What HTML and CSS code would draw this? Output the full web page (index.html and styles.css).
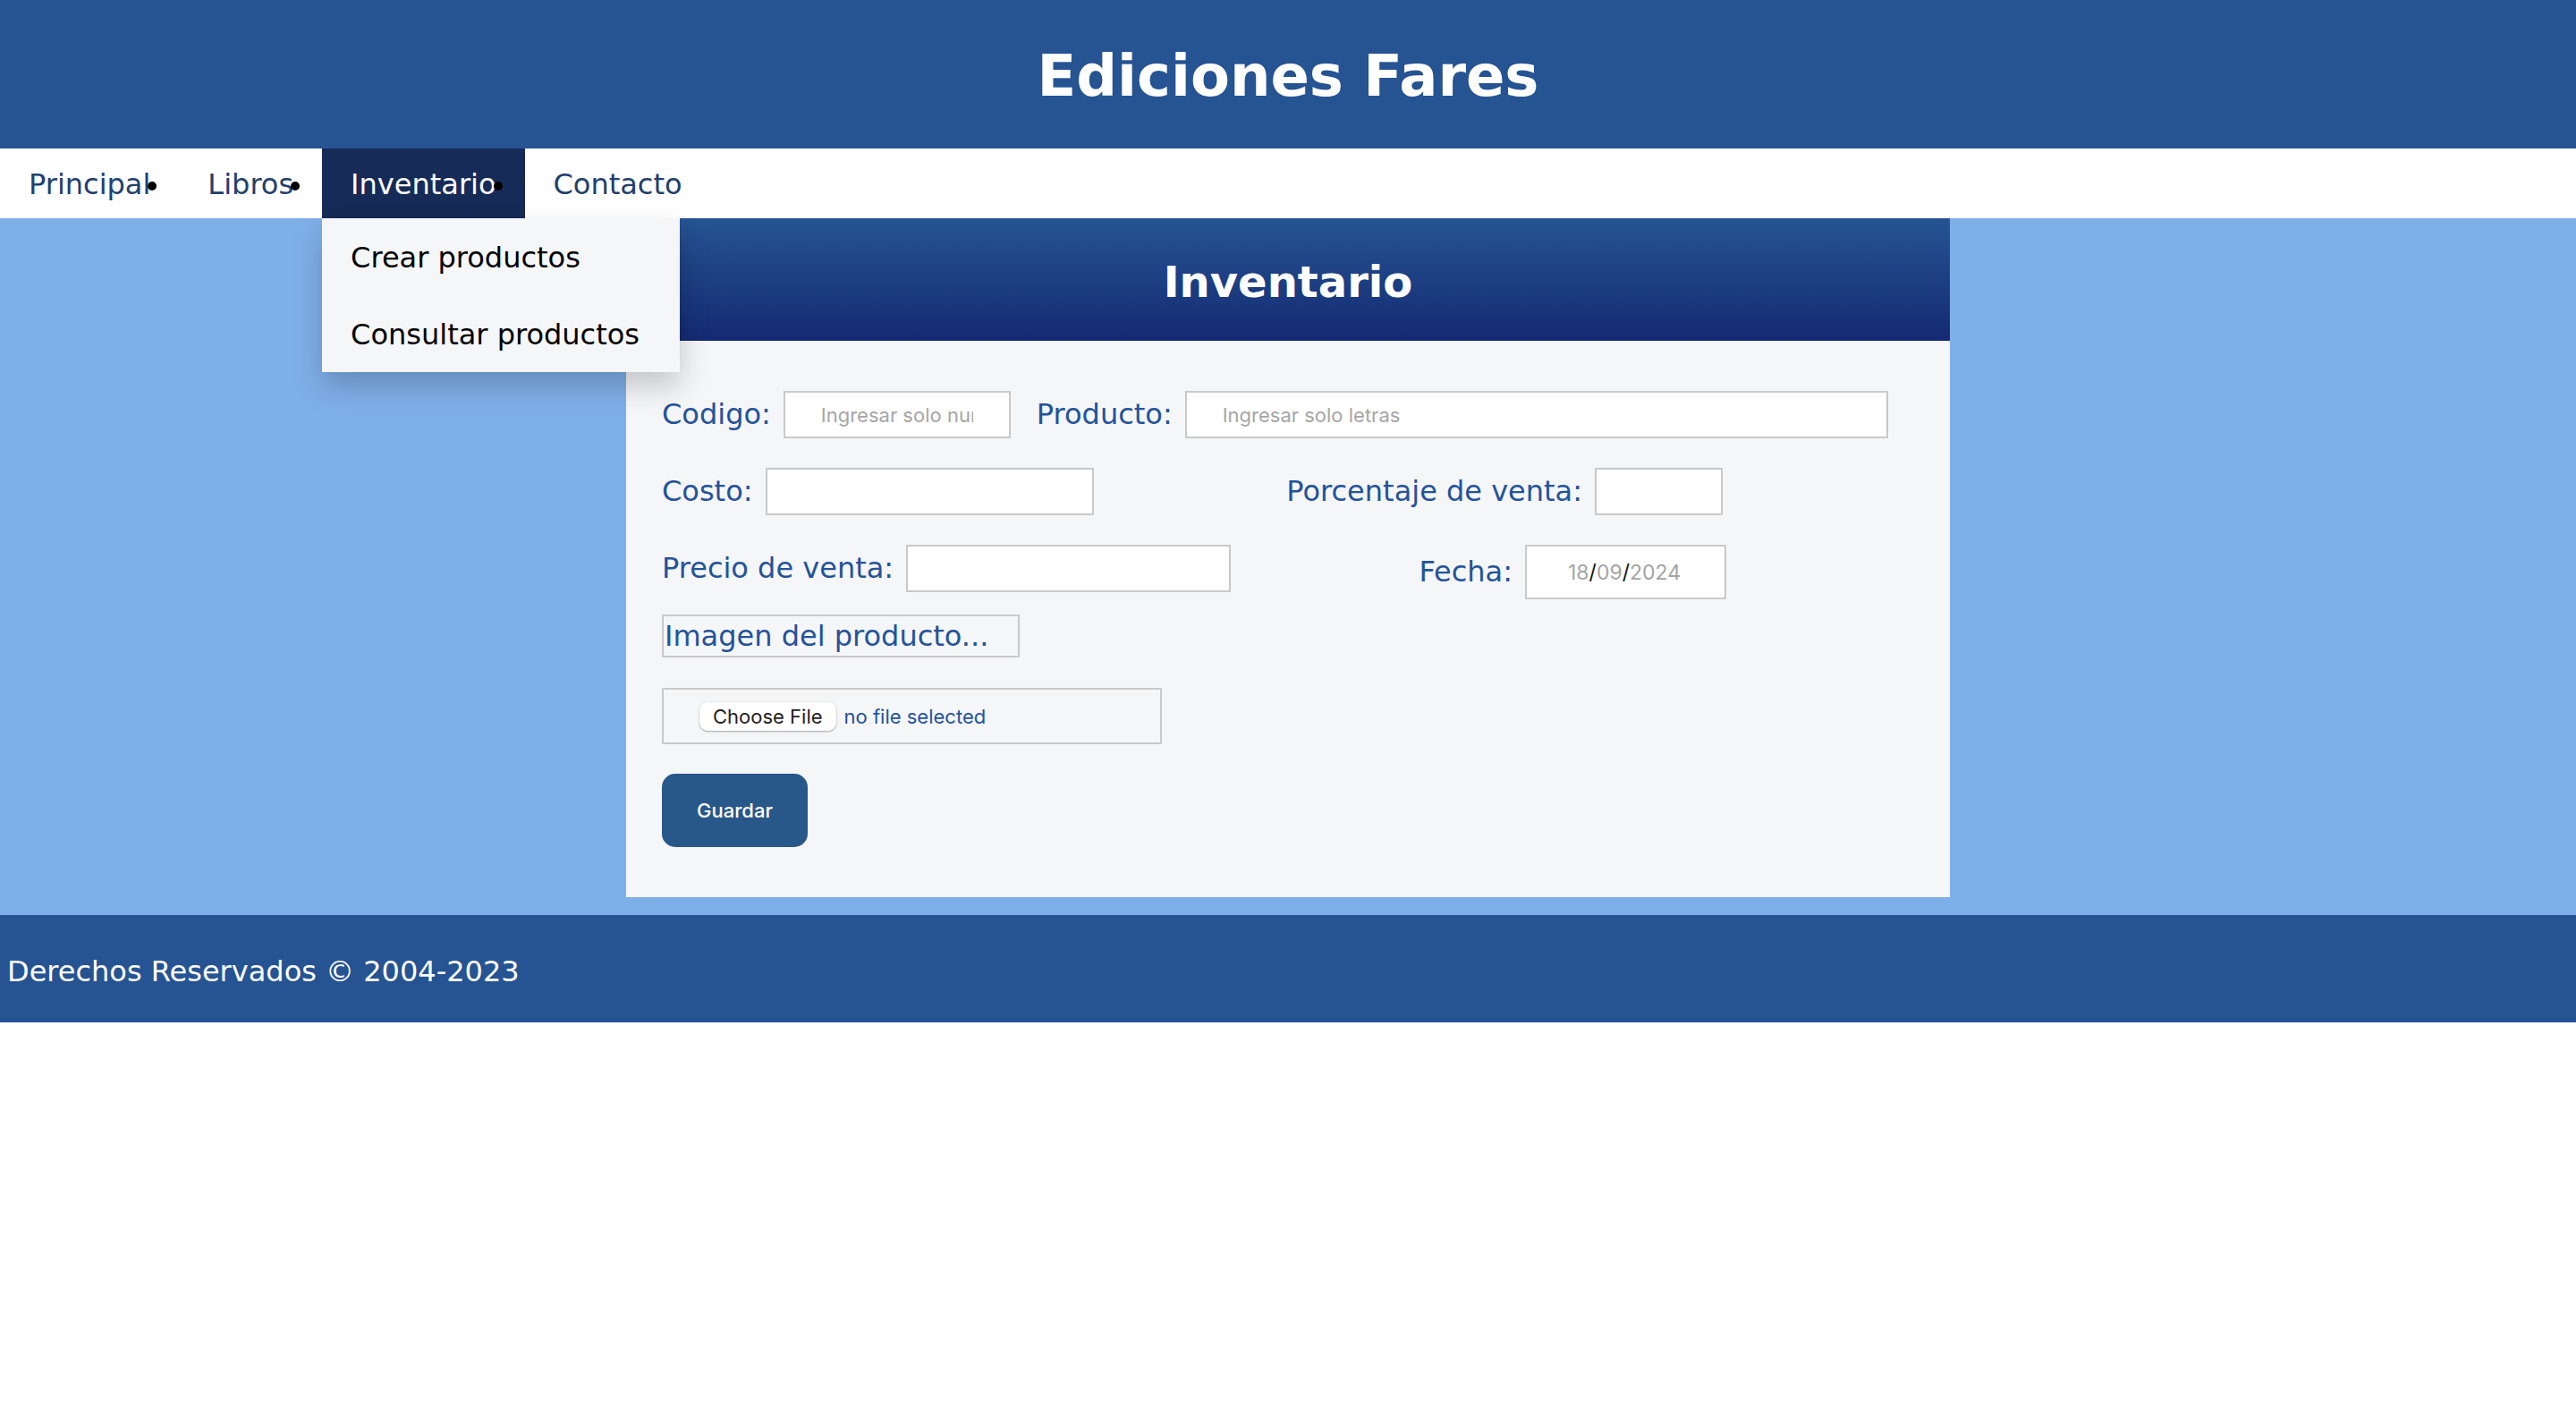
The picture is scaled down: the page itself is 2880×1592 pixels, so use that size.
FILE: index.html
```html
<!DOCTYPE html>
<html lang="es">
<head>
<meta charset="utf-8">
<title>Inventario - Ediciones Fares</title>
<link rel="stylesheet" href="styles.css">
</head>
<body>
<header class="site-header">
  <h1 class="site-title">Ediciones Fares</h1>
</header>
<nav class="main-nav">
  <ul class="nav-list">
    <li class="nav-item"><a class="nav-link" href="#">Principal</a></li>
    <li class="nav-item"><a class="nav-link" href="#">Libros</a></li>
    <li class="nav-item">
      <a class="nav-link active" href="#">Inventario</a>
      <div class="dropdown-menu">
        <a class="dropdown-link" href="#">Crear productos</a>
        <a class="dropdown-link" href="#">Consultar productos</a>
      </div>
    </li>
    <li class="nav-item"><a class="nav-link" href="#">Contacto</a></li>
  </ul>
</nav>
<main class="page">
  <section class="card">
    <h2 class="card-title">Inventario</h2>
    <form class="form">
      <div class="row">
        <label class="label">Codigo:</label>
        <input class="field field-codigo" type="text" placeholder="Ingresar solo numeros">
        <label class="label label-producto">Producto:</label>
        <input class="field field-producto" type="text" placeholder="Ingresar solo letras">
      </div>
      <div class="row row-split">
        <div class="group">
          <label class="label">Costo:</label>
          <input class="field field-costo" type="text">
        </div>
        <div class="group group-porcentaje">
          <label class="label">Porcentaje de venta:</label>
          <input class="field field-porcentaje" type="text">
        </div>
      </div>
      <div class="row row-split row-top">
        <div class="group">
          <label class="label">Precio de venta:</label>
          <input class="field field-precio" type="text">
        </div>
        <div class="group">
          <label class="label">Fecha:</label>
          <div class="date-field"><span class="date-part">18</span><span class="date-sep">/</span><span class="date-part">09</span><span class="date-sep">/</span><span class="date-part">2024</span></div>
        </div>
      </div>
      <div class="image-row">
        <label class="image-label">Imagen del producto...</label>
      </div>
      <div class="file-box">
        <span class="file-button">Choose File</span>
        <span class="file-status">no file selected</span>
      </div>
      <div class="actions">
        <button class="save-button" type="button">Guardar</button>
      </div>
    </form>
  </section>
</main>
<footer class="site-footer">Derechos Reservados © 2004-2023</footer>
</body>
</html>
```

FILE: styles.css
```css
* {
  box-sizing: border-box;
}

html,
body {
  margin: 0;
  padding: 0;
}

body {
  font-family: "DejaVu Sans", Verdana, sans-serif;
  background: #ffffff;
  color: #000000;
}

/* Header */
.site-header {
  background: #265392;
  height: 166px;
  padding-top: 48px;
  text-align: center;
}

.site-title {
  margin: 0;
  font-size: 64px;
  font-weight: bold;
  line-height: normal;
  color: #ffffff;
}

/* Navigation */
.main-nav {
  background: #ffffff;
  height: 78px;
  position: relative;
  z-index: 5;
}

.nav-list {
  display: flex;
  margin: 0;
  padding: 0;
  list-style: none;
}

.nav-item {
  position: relative;
  font-size: 32px;
}

/* list bullet drawn just after the previous item's text */
.nav-item + .nav-item::before {
  content: "";
  position: absolute;
  left: -35px;
  top: 37px;
  width: 10px;
  height: 10px;
  border-radius: 50%;
  background: #000000;
  z-index: 2;
}

.nav-link {
  display: block;
  padding: 22px 32px 19px;
  font-size: 32px;
  line-height: 37px;
  color: #223f6d;
  text-decoration: none;
}

.nav-link.active {
  background: #172b58;
  color: #ffffff;
}

.dropdown-menu {
  position: absolute;
  top: 100%;
  left: 0;
  min-width: 400px;
  background: #f5f6f8;
  box-shadow: 0 16px 32px rgba(0, 0, 0, 0.2);
  z-index: 10;
}

.dropdown-link {
  display: block;
  padding: 25px 32px 23px;
  font-size: 32px;
  line-height: 38px;
  color: #000000;
  text-decoration: none;
  white-space: nowrap;
}

/* Main */
.page {
  background: #7fafe9;
  padding-bottom: 20px;
}

.card {
  width: 1480px;
  margin: 0 auto;
  background: #f5f6f8;
}

.card-title {
  margin: 0;
  padding: 43px 0 38px;
  font-size: 48px;
  line-height: 56px;
  font-weight: bold;
  text-align: center;
  color: #ffffff;
  background: linear-gradient(to bottom, #265493, #142a72);
}

.form {
  padding: 56px 40px;
}

.row {
  display: flex;
  align-items: center;
}

.row + .row {
  margin-top: 33px;
}

.row-split {
  width: 1190px;
  justify-content: space-between;
}

.row-top {
  align-items: flex-start;
}

.group {
  display: flex;
  align-items: center;
}

.group-porcentaje {
  margin-right: 4px;
}

.label {
  font-size: 32px;
  line-height: 37px;
  color: #24539a;
  margin-right: 14px;
  white-space: nowrap;
}

.label-producto {
  margin-left: 29px;
}

.field {
  height: 53px;
  padding: 0 40px;
  border: 2px solid #c9c9c9;
  border-radius: 0;
  background: #ffffff;
  font-family: Inter, "Liberation Sans", sans-serif;
  font-size: 22px;
  color: #000000;
  outline: none;
}

.field::placeholder {
  color: #a6a6a6;
}

.field-codigo {
  width: 254px;
}

.field-producto {
  width: 786px;
}

.field-costo {
  width: 367px;
}

.field-porcentaje {
  width: 143px;
}

.field-precio {
  width: 363px;
}

.date-field {
  display: flex;
  align-items: center;
  width: 225px;
  height: 61px;
  padding-left: 46px;
  border: 2px solid #c9c9c9;
  background: #ffffff;
  font-family: Inter, "Liberation Sans", sans-serif;
  font-size: 23px;
}

.date-part {
  color: #a3a3a3;
}

.date-sep {
  color: #111111;
}

.image-row {
  margin-top: 17px;
}

.image-label {
  display: inline-block;
  width: 400px;
  padding: 3px 1px;
  border: 2px solid #c9c9c9;
  font-size: 32px;
  line-height: 38px;
  color: #24539a;
}

.file-box {
  display: flex;
  align-items: center;
  width: 559px;
  height: 63px;
  margin-top: 34px;
  padding: 0 40px;
  border: 2px solid #c9c9c9;
  font-family: Inter, "Liberation Sans", sans-serif;
  font-size: 22px;
}

.file-button {
  display: flex;
  align-items: center;
  height: 32px;
  padding: 0 15px;
  background: #ffffff;
  border-radius: 9px;
  box-shadow: 0 1px 2px rgba(0, 0, 0, 0.3), 0 0 0 1px rgba(0, 0, 0, 0.04);
  color: #1e1e1e;
}

.file-status {
  margin-left: 9px;
  color: #24539a;
}

.actions {
  margin-top: 33px;
}

.save-button {
  width: 163px;
  height: 82px;
  border: none;
  border-radius: 15px;
  background: #275889;
  color: #ffffff;
  font-family: Inter, "Liberation Sans", sans-serif;
  font-size: 22px;
  font-weight: 500;
  padding: 0;
}

/* Footer */
.site-footer {
  background: #265392;
  height: 120px;
  padding: 45px 8px 0;
  font-size: 32px;
  line-height: 37px;
  color: #ffffff;
}
```
